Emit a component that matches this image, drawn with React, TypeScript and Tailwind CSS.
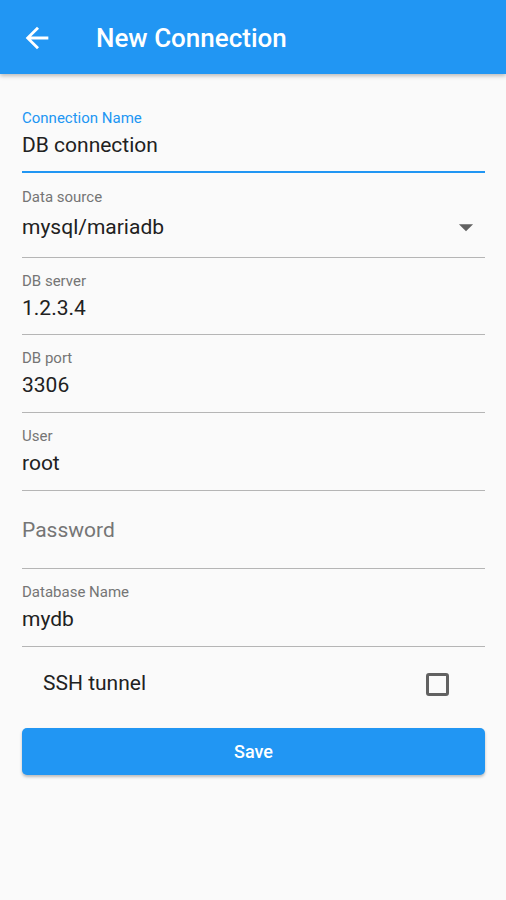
import { useState } from "react";

type FieldProps = {
  label: string;
  value: string;
  focused?: boolean;
  tight?: boolean;
};

function Field({ label, value, focused = false, tight = false }: FieldProps) {
  return (
    <div
      className={
        focused
          ? "pt-[13px] pb-[12px] border-b-2 border-[#2196f3]"
          : tight
            ? "pt-[13px] pb-[12px] border-b border-[#b5b5b5]"
            : "pt-[13px] pb-[13px] border-b border-[#b5b5b5]"
      }
    >
      <div
        className={`h-[20px] leading-[20px] text-[15px] ${focused ? "text-[#2196f3]" : "text-[#757575]"}`}
      >
        {label}
      </div>
      <div className="mt-[3px] h-[28px] leading-[28px] text-[21px] text-[#212121]">{value}</div>
    </div>
  );
}

export default function App() {
  const [ssh, setSsh] = useState(false);

  return (
    <div className="min-h-[900px] bg-[#fafafa] font-['Roboto',sans-serif]">
      <header className="h-[74px] bg-[#2196f3] flex items-center pl-[20px] pt-[2px] shadow-[0_2px_4px_rgba(0,0,0,0.25)] relative z-10">
        <svg width="34" height="34" viewBox="0 0 24 24" fill="white">
          <path d="M20 11H7.83l5.59-5.59L12 4l-8 8 8 8 1.41-1.41L7.83 13H20v-2z" />
        </svg>
        <h1 className="ml-[42px] text-[26px] font-medium text-white leading-none">New Connection</h1>
      </header>

      <main className="pl-[22px] pr-[21px] pt-[21px]">
        <Field label="Connection Name" value="DB connection" focused />

        <div className="pt-[14px] pb-[16px] border-b border-[#b5b5b5]">
          <div className="h-[20px] leading-[20px] text-[15px] text-[#757575]">Data source</div>
          <div className="mt-[6px] h-[28px] flex items-center justify-between">
            <span className="leading-[28px] text-[21px] text-[#212121]">mysql/mariadb</span>
            <svg width="34" height="34" viewBox="0 0 24 24" fill="#616161" className="mr-[2px]">
              <path d="M7 10l5 5 5-5z" />
            </svg>
          </div>
        </div>

        <Field label="DB server" value="1.2.3.4" tight />
        <Field label="DB port" value="3306" />
        <Field label="User" value="root" />

        <div className="pt-[25px] pb-[24px] border-b border-[#b5b5b5]">
          <div className="h-[28px] leading-[28px] text-[21px] text-[#757575]">Password</div>
        </div>

        <Field label="Database Name" value="mydb" />

        <div className="h-[74px] flex items-center justify-between pl-[21px] pr-[36px]">
          <span className="text-[21px] text-[#212121]">SSH tunnel</span>
          <button
            type="button"
            onClick={() => setSsh(!ssh)}
            className="w-[23px] h-[23px] border-[3px] border-[#616161] rounded-[3px]"
          />
        </div>

        <button
          type="button"
          className="mt-[7px] w-full h-[47px] rounded-[5px] bg-[#2196f3] text-white text-[18px] font-medium shadow-[0_2px_3px_rgba(0,0,0,0.25)]"
        >
          Save
        </button>
      </main>
    </div>
  );
}
